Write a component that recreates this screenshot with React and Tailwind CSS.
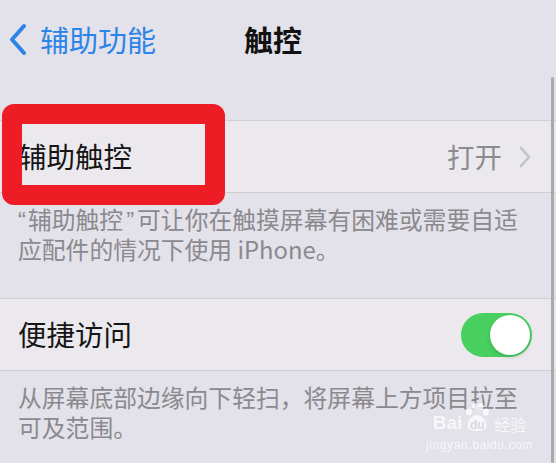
const font = "font-['Noto_Sans_CJK_SC','Noto_Sans',sans-serif]";

const Row = ({ children }) => (
  <div className="flex h-[73px] items-center border-y border-[#d0ced5] bg-[#ece9ee] pl-[18px] pr-[24px]">
    {children}
  </div>
);

const Footer = ({ lines }) => (
  <div className="px-[18px] pt-[11px] text-[23.8px] leading-[30px] text-[#8a898e]">
    {lines.map((l, i) => (
      <div key={i} className="h-[30px] whitespace-nowrap">
        {l}
      </div>
    ))}
  </div>
);

const Q = ({ children, cls }) => (
  <span className={`font-['Liberation_Sans',sans-serif] leading-[0] ${cls}`}>{children}</span>
);

export default function App() {
  return (
    <div className={`relative h-[463px] w-[556px] overflow-hidden bg-[#e3e1e9] ${font}`}>
      {/* nav bar */}
      <div className="relative flex h-[80px] items-center pb-[2px]">
        <div className="flex items-center pl-[8px] text-[#2b84e8]">
          <svg width="20" height="33" viewBox="0 0 20 33" fill="none">
            <path
              d="M16 3 L4 16.5 L16 30"
              stroke="currentColor"
              strokeWidth="4"
              strokeLinecap="round"
              strokeLinejoin="round"
            />
          </svg>
          <span className="ml-[12px] text-[29px] leading-none">辅助功能</span>
        </div>
        <span className="ml-[88px] text-[29px] font-bold leading-none text-[#111]">
          触控
        </span>
      </div>

      <div className="mt-[40px]">
        <Row>
          <span className="text-[28.5px] leading-none text-[#151515]">辅助触控</span>
          <span className="ml-auto text-[27.5px] leading-none text-[#8b8a8f]">打开</span>
          <svg className="ml-[16px]" width="14" height="22" viewBox="0 0 14 22" fill="none">
            <path
              d="M3 2 L11 11 L3 20"
              stroke="#c3c2c8"
              strokeWidth="2.6"
              strokeLinecap="round"
              strokeLinejoin="round"
            />
          </svg>
        </Row>
        <Footer
          lines={[
            <>
              <Q cls="mr-[2px]">“</Q>辅助触控<Q cls="ml-[3px] mr-[3px]">”</Q>可让你在触摸屏幕有困难或需要自适
            </>,
            "应配件的情况下使用 iPhone。",
          ]}
        />
      </div>

      <div className="mt-[34px]">
        <Row>
          <span className="text-[28.5px] leading-none text-[#151515]">便捷访问</span>
          <div className="ml-auto flex h-[44px] w-[71px] items-center justify-end rounded-full bg-[#47cf5f] pr-[2px]">
            <div className="h-[40px] w-[40px] rounded-full bg-white shadow-[0_2px_4px_rgba(0,0,0,0.15)]" />
          </div>
        </Row>
        <Footer lines={["从屏幕底部边缘向下轻扫，将屏幕上方项目拉至", "可及范围。"]} />
      </div>

      {/* scroll indicator */}
      <div className="absolute right-[2px] top-[77px] bottom-0 w-[3px] rounded-full bg-[#a9a8ae]" />

      {/* red annotation box */}
      <div className="absolute left-[2px] top-[104px] h-[101px] w-[223px] rounded-[12px] border-[20px] border-[#ee1c25]" />

      {/* watermark */}
      <div className="absolute left-[426px] top-[410px] flex flex-col items-center text-white/75">
        <div className="flex items-end font-['Liberation_Sans',sans-serif] text-[19px] font-bold leading-none">
          <span>Bai</span>
          <span className="relative mx-[1px] flex h-[22px] w-[28px] items-end justify-center">
            <svg className="absolute left-0 top-[-8px]" width="28" height="30" viewBox="0 0 26 30" fill="currentColor">
              <ellipse cx="5" cy="10" rx="3" ry="3.5" />
              <ellipse cx="10.5" cy="4.5" rx="2.8" ry="3.5" />
              <ellipse cx="16.5" cy="4.5" rx="2.8" ry="3.5" />
              <ellipse cx="22" cy="10" rx="3" ry="3.5" />
              <path d="M13 13 C7 13 2 21 4 26 C6 30 20 30 22 26 C24 21 19 13 13 13 Z" />
            </svg>
            <span className="relative mb-[1px] text-[12px] text-[#d8d6de]">du</span>
          </span>
          <span className={`${font} ml-[2px] text-[16px] font-normal`}>经验</span>
        </div>
        <div className="mt-[7px] font-['Liberation_Sans',sans-serif] text-[12px] leading-none tracking-[0.6px]">
          jingyan.baidu.com
        </div>
      </div>
    </div>
  );
}
